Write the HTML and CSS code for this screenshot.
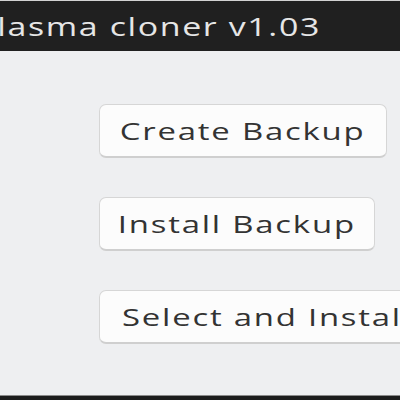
FILE: index.html
```html
<html>
    <head>
        <title>plasma cloner v1.03</title>
        <link rel="stylesheet" href="styles.css">
    </head>
    <body>
        <div class="window">
            <div class="titlebar">
                <span class="title">plasma cloner v1.03</span>
            </div>
            <div class="content">
                <button class="btn btn-create"><span class="label">Create Backup</span></button>
                <button class="btn btn-install"><span class="label">Install Backup</span></button>
                <button class="btn btn-select"><span class="label">Select and Install Backup</span></button>
            </div>
            <div class="footer"></div>
        </div>
    </body>
</html>
```

FILE: styles.css
```css
body {
    margin: 0;
    width: 400px;
    height: 400px;
    overflow: hidden;
    font-family: "Open Sans", "Noto Sans", sans-serif;
}
.window {
    display: flex;
    flex-direction: column;
    height: 400px;
    background: #eeeff1;
}
.titlebar {
    height: 50px;
    border-top: 1px solid #d2d2d2;
    background: #202020;
    color: #e6e6e6;
    display: flex;
    align-items: center;
    white-space: nowrap;
    overflow: hidden;
}
/* the screenshot is stretched sideways, so the text is too */
.title {
    display: inline-block;
    font-size: 25px;
    letter-spacing: 1.2px;
    margin-left: -25px;
    transform: scaleX(1.356);
    transform-origin: left center;
}
.content {
    flex: 1;
    display: flex;
    flex-direction: column;
    align-items: flex-start;
    gap: 39px;
    padding: 53px 0 0 99px;
    overflow: hidden;
}
.btn {
    height: 54px;
    flex-shrink: 0;
    padding: 0;
    background: #fcfcfc;
    border: 1px solid #d6d6d6;
    border-bottom: 2px solid #cfcfcf;
    border-radius: 7px;
    color: #333;
    font-family: "Open Sans", "Noto Sans", sans-serif;
    font-size: 24px;
    white-space: nowrap;
}
.label {
    display: inline-block;
    letter-spacing: 1.3px;
    transform: scaleX(1.37);
}
.btn-create { width: 288px; }
.btn-install { width: 276px; }
.btn-select {
    width: 420px;
    text-align: left;
    padding-left: 22px;
}
.btn-select .label { transform-origin: left center; }
.footer {
    height: 4px;
    border-top: 1px solid #8a8a8a;
    background: #1c1c1c;
}
```
